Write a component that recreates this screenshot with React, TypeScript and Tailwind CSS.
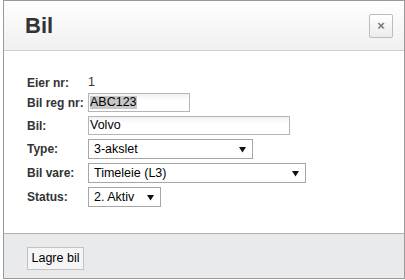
import React from "react";

const font = { fontFamily: '"Liberation Sans", Arial, sans-serif' };

function Arrow() {
  return (
    <svg width="7" height="7" viewBox="0 0 7 7" className="shrink-0">
      <path d="M0 1h7L3.5 6.5z" fill="#111" />
    </svg>
  );
}

function FakeSelect({ value, width }: { value: string; width: string }) {
  return (
    <div
      className={`flex h-[20px] items-center justify-between border border-[#a6a6a6] bg-white pl-[5px] pr-[6px] text-[12.5px] text-black ${width}`}
    >
      <span>{value}</span>
      <Arrow />
    </div>
  );
}

export default function App() {
  return (
    <div className="h-[280px] w-[405px] overflow-hidden bg-white" style={font}>
      <div className="ml-[3px] flex h-[279px] w-[402px] flex-col border border-[#9a9a9a] bg-white">
        <div className="flex h-[50px] items-center justify-between border-b border-[#cfcfcf] bg-gradient-to-b from-white to-[#f0f0f0] pl-[21px] pr-[11px]">
          <h1 className="text-[22px] font-bold leading-none text-[#333]">Bil</h1>
          <button className="flex h-[24px] w-[24px] items-center justify-center rounded-[2px] border border-[#bdbdbd] bg-gradient-to-b from-white to-[#ececec] text-[13px] font-bold leading-none text-[#7a7a7a]">
            ×
          </button>
        </div>

        <div className="flex-1 pl-[23px] pt-[24px] text-[12px]">
          <div className="flex h-[15px] items-center">
            <span className="w-[61px] font-bold text-[#333]">Eier nr:</span>
            <span className="text-[12.5px] text-[#333]">1</span>
          </div>
          <div className="mt-[3px] flex h-[19px] items-center">
            <span className="w-[61px] font-bold text-[#333]">Bil reg nr:</span>
            <div className="flex h-[19px] w-[102px] items-center border border-[#b5b5b5] bg-gradient-to-b from-[#f2f2f2] to-white to-40% pl-[1px] text-[12.5px] text-black">
              <span className="bg-[#c8c8c8] leading-[13px]">ABC123</span>
            </div>
          </div>
          <div className="mt-[4px] flex h-[19px] items-center">
            <span className="w-[61px] font-bold text-[#333]">Bil:</span>
            <div className="flex h-[19px] w-[202px] items-center border border-[#b5b5b5] bg-gradient-to-b from-[#f2f2f2] to-white to-40% pl-[1px] text-[12.5px] text-black">
              Volvo
            </div>
          </div>
          <div className="mt-[4px] flex items-center">
            <span className="w-[61px] font-bold text-[#333]">Type:</span>
            <FakeSelect value="3-akslet" width="w-[165px]" />
          </div>
          <div className="mt-[4px] flex items-center">
            <span className="w-[61px] font-bold text-[#333]">Bil vare:</span>
            <FakeSelect value="Timeleie (L3)" width="w-[218px]" />
          </div>
          <div className="mt-[4px] flex items-center">
            <span className="w-[61px] font-bold text-[#333]">Status:</span>
            <FakeSelect value="2. Aktiv" width="w-[73px]" />
          </div>
        </div>

        <div className="h-[45px] border-t border-[#b0b0b0] bg-[#e9eaeb] pl-[23px] pt-[11px]">
          <button className="h-[23px] w-[57px] border border-[#c2c2c2] bg-[#f5f5f5] text-[12.5px] text-black">
            Lagre bil
          </button>
        </div>
      </div>
    </div>
  );
}
